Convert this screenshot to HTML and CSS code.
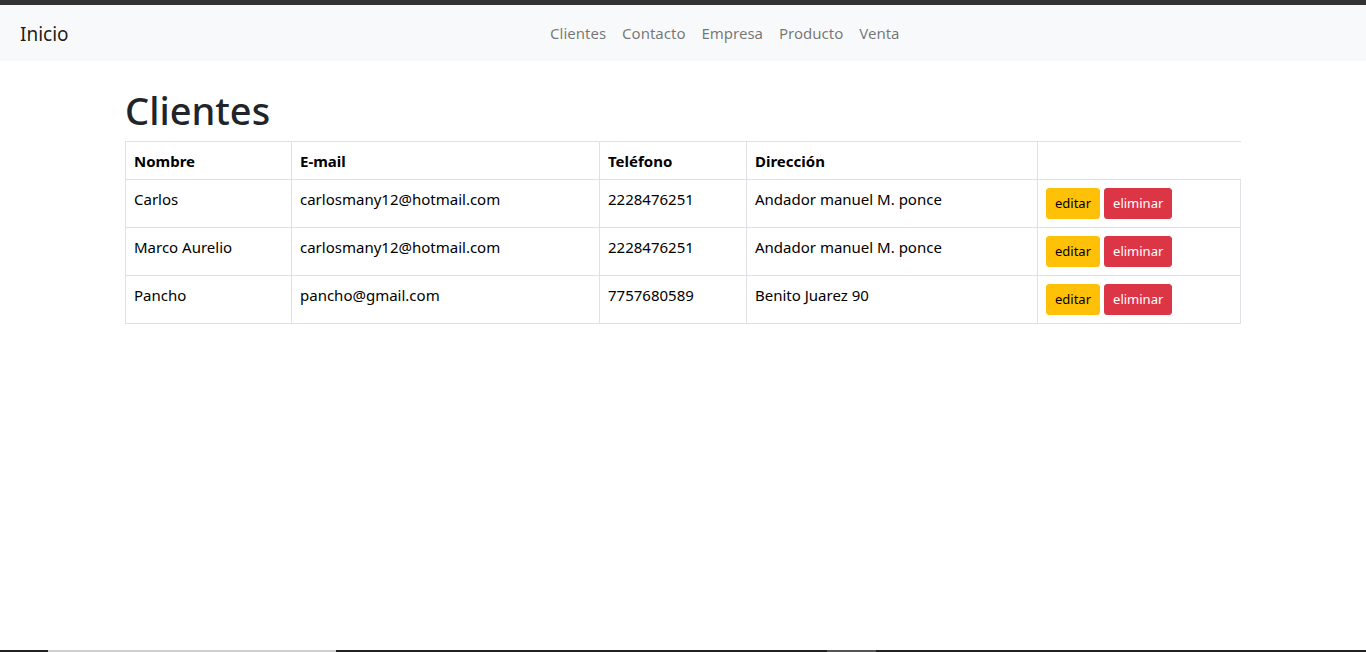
FILE: index.html
```html
<!DOCTYPE html>
<html lang="es">
<head>
<meta charset="utf-8">
<title>Clientes</title>
<link rel="stylesheet" href="styles.css">
</head>
<body>
<div class="topline"></div>
<nav class="navbar">
  <a class="brand" href="#">Inicio</a>
  <ul class="nav">
    <li><a href="#">Clientes</a></li>
    <li><a href="#">Contacto</a></li>
    <li><a href="#">Empresa</a></li>
    <li><a href="#">Producto</a></li>
    <li><a href="#">Venta</a></li>
  </ul>
</nav>
<main class="container">
  <h1 class="title">Clientes</h1>
  <table class="table">
    <thead>
      <tr>
        <th class="c1">Nombre</th>
        <th class="c2">E-mail</th>
        <th class="c3">Teléfono</th>
        <th class="c4">Dirección</th>
        <th class="c5 last"></th>
      </tr>
    </thead>
    <tbody>
      <tr>
        <td>Carlos</td>
        <td>carlosmany12@hotmail.com</td>
        <td>2228476251</td>
        <td>Andador manuel M. ponce</td>
        <td><span class="actions"><button class="btn warn">editar</button><button class="btn danger">eliminar</button></span></td>
      </tr>
      <tr>
        <td>Marco Aurelio</td>
        <td>carlosmany12@hotmail.com</td>
        <td>2228476251</td>
        <td>Andador manuel M. ponce</td>
        <td><span class="actions"><button class="btn warn">editar</button><button class="btn danger">eliminar</button></span></td>
      </tr>
      <tr>
        <td>Pancho</td>
        <td>pancho@gmail.com</td>
        <td>7757680589</td>
        <td>Benito Juarez 90</td>
        <td><span class="actions"><button class="btn warn">editar</button><button class="btn danger">eliminar</button></span></td>
      </tr>
    </tbody>
  </table>
</main>
<div class="bottombar">
  <span class="seg dark1"></span><span class="seg light"></span><span class="seg dark2"></span><span class="seg mid"></span><span class="seg dark3"></span>
</div>
</body>
</html>
```
FILE: styles.css
```css
* { box-sizing: border-box; }
html, body { margin: 0; padding: 0; }
body {
  font-family: "Segoe UI", "Noto Sans", "Open Sans", sans-serif;
  font-size: 16px;
  line-height: 1.5;
  color: #212529;
  background: #fff;
  height: 652px;
  position: relative;
  overflow: hidden;
}
.topline { height: 5px; background: #333333; }
.navbar {
  height: 56px;
  background: #f8f9fa;
  display: flex;
  align-items: center;
  padding: 0 12px 0 20px;
}
.brand {
  font-size: 19px;
  color: rgba(0,0,0,.9);
  text-decoration: none;
  margin-right: 16px;
  line-height: 30px;
  padding-top: 2px;
}
.nav {
  list-style: none;
  margin: 0;
  padding: 0 0 0 11px;
  flex: 1;
  display: flex;
  justify-content: center;
}
.nav a {
  display: block;
  padding: 8px 8px;
  color: rgba(0,0,0,.55);
  text-decoration: none;
  font-size: 15px;
  line-height: 24px;
}
.container {
  width: 1140px;
  margin: 0 auto;
  padding: 0 12px;
}
.title {
  font-size: 38px;
  font-weight: 500;
  line-height: 46px;
  margin: 26px 0 8px;
  color: #212529;
}
.table {
  width: 100%;
  border-collapse: collapse;
  color: #000;
}
.table th, .table td {
  border: 1px solid #dee2e6;
  padding: 7px 8px;
  text-align: left;
  vertical-align: top;
  font-size: 15px;
  line-height: 22px;
}
.table th { font-weight: 700; height: 38px; padding-top: 8px; }
.table th.last { border-right: none; }
.table td { height: 48px; padding-top: 8px; }
.c1 { width: 166px; }
.c2 { width: 308px; }
.c3 { width: 147px; }
.c4 { width: 291px; }
.actions { display: flex; gap: 4px; }
.btn {
  font-family: inherit;
  font-size: 13px;
  line-height: 21px;
  padding: 4px 8px;
  border: 1px solid transparent;
  border-radius: 3px;
  cursor: pointer;
}
.warn { background: #ffc107; border-color: #ffc107; color: #000; }
.danger { background: #dc3545; border-color: #dc3545; color: #fff; }
.bottombar {
  position: absolute;
  left: 0; right: 0; bottom: 0;
  height: 2px;
  display: flex;
}
.seg { display: block; height: 2px; }
.dark1 { width: 48px; background: #222; }
.light { width: 288px; background: #cfcfcf; }
.dark2 { width: 491px; background: #222; }
.mid { width: 49px; background: #555; }
.dark3 { flex: 1; background: #222; }
```
